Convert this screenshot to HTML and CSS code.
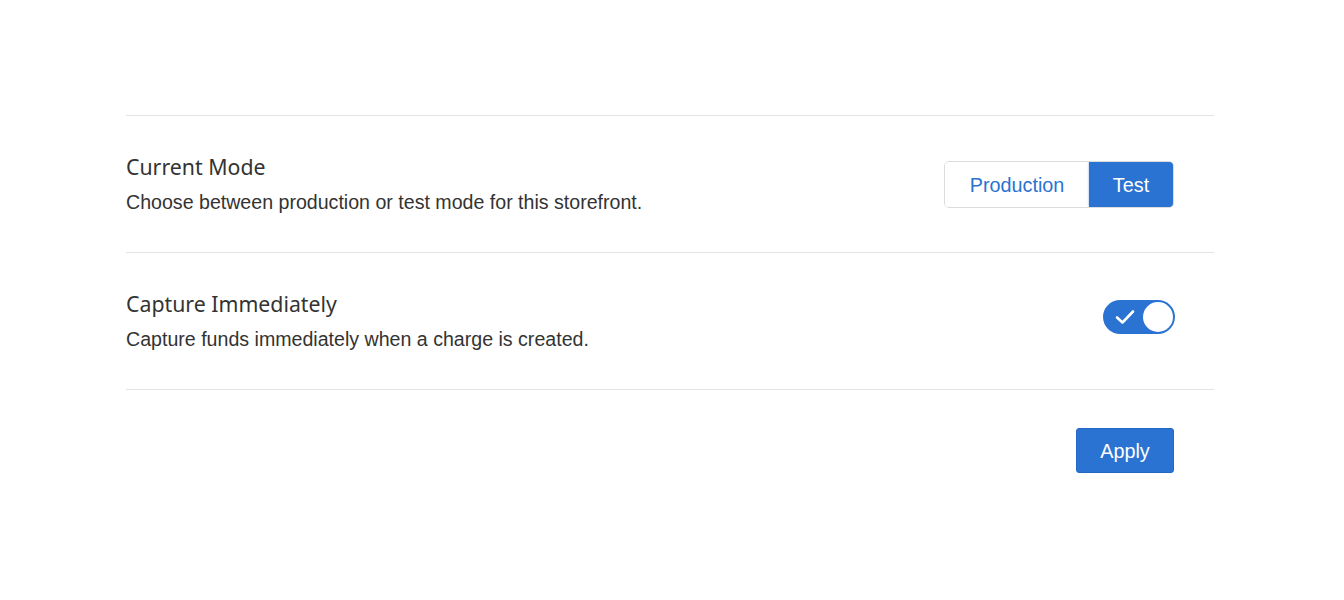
FILE: index.html
```html
<!DOCTYPE html>
<html>
<head>
<meta charset="utf-8">
<link rel="stylesheet" href="styles.css">
</head>
<body>
<div class="panel">
  <div class="row">
    <div class="info">
      <div class="title">Current Mode</div>
      <div class="desc">Choose between production or test mode for this storefront.</div>
    </div>
    <div class="segmented">
      <button class="seg">Production</button>
      <button class="seg active">Test</button>
    </div>
  </div>
  <div class="row">
    <div class="info">
      <div class="title">Capture Immediately</div>
      <div class="desc">Capture funds immediately when a charge is created.</div>
    </div>
    <div class="toggle">
      <svg class="check" width="20" height="16" viewBox="0 0 20 16"><path d="M2 8.5 L7.5 13.5 L18 2.5" fill="none" stroke="#fff" stroke-width="2.6" stroke-linecap="round" stroke-linejoin="round"/></svg>
      <span class="knob"></span>
    </div>
  </div>
  <div class="footer">
    <button class="apply">Apply</button>
  </div>
</div>
</body>
</html>
```
FILE: styles.css
```css
html, body {
  margin: 0;
  padding: 0;
  background: #fff;
}
body {
  font-family: "Liberation Sans", Arial, sans-serif;
  color: #333;
}
.panel {
  margin: 115px 0 0 126px;
  width: 1088px;
}
.row {
  display: flex;
  align-items: center;
  justify-content: space-between;
  height: 136px;
  border-top: 1px solid #e3e3e3;
  padding-right: 40px;
}
.footer {
  border-top: 1px solid #e3e3e3;
  display: flex;
  justify-content: flex-end;
  padding: 38px 40px 0 0;
}
.title {
  font-family: "Noto Sans", "Open Sans", sans-serif;
  font-size: 21.3px;
  line-height: 26px;
  color: #333;
}
.desc {
  margin-top: 10px;
  font-size: 19.6px;
  line-height: 24px;
  color: #333;
}
.segmented {
  display: flex;
  height: 47px;
  border: 1px solid #dcdcdc;
  border-radius: 5px;
  box-sizing: border-box;
  overflow: hidden;
}
.seg {
  font-family: "Liberation Sans", Arial, sans-serif;
  font-size: 19.8px;
  border: none;
  background: #fff;
  color: #2a73d2;
  padding: 2px 0 0;
  width: 144px;
  margin: 0;
}
.seg.active {
  width: 84px;
  background: #2a73d2;
  color: #fff;
  box-shadow: 0 0 2px rgba(42,115,210,0.6);
}
.toggle {
  position: relative;
  width: 72px;
  height: 34px;
  border-radius: 17px;
  background: #2a73d2;
  box-sizing: border-box;
  margin: 0 -1px 8px 0;
  display: flex;
  align-items: center;
}
.check {
  margin-left: 12px;
}
.knob {
  position: absolute;
  right: 2px;
  top: 2px;
  width: 30px;
  height: 30px;
  border-radius: 50%;
  background: #fff;
}
.apply {
  font-family: "Liberation Sans", Arial, sans-serif;
  font-size: 19.8px;
  width: 98px;
  height: 45px;
  border: 1px solid #2468c4;
  border-radius: 3px;
  background: #2a73d2;
  color: #fff;
  padding: 2px 0 0;
}
```
